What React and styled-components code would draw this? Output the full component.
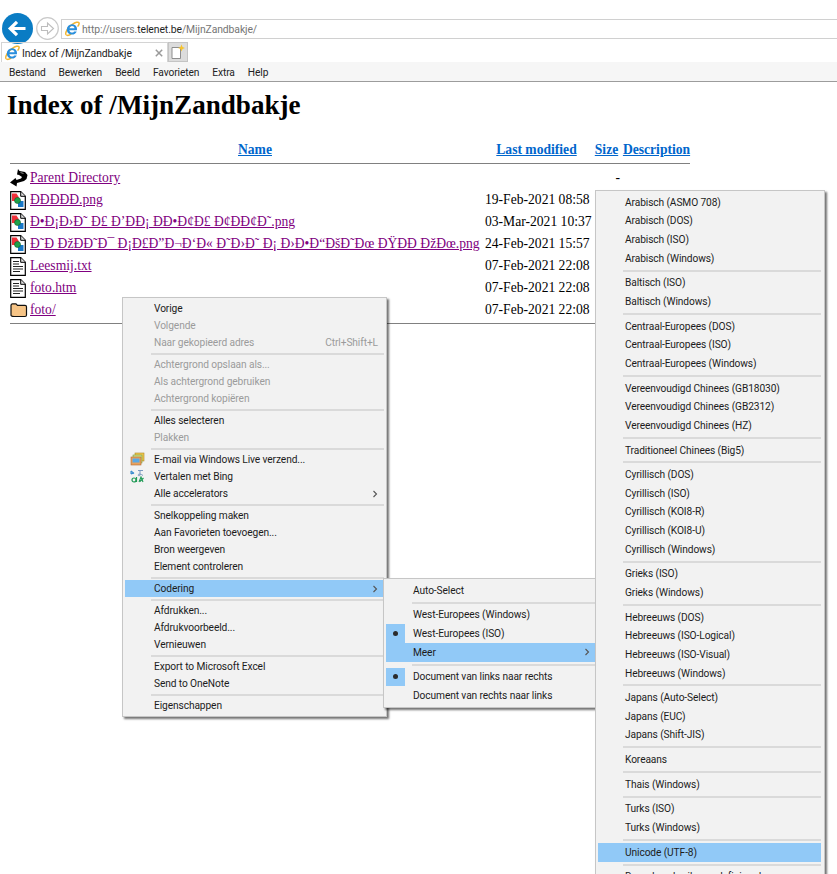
import React from 'react';
import styled, { createGlobalStyle } from 'styled-components';

const GlobalStyle = createGlobalStyle`
  html, body { margin: 0; padding: 0; background: #fff; }
  #root { width: 837px; height: 874px; overflow: hidden; position: relative; }
`;

const uiFont = `Roboto, "Noto Sans", "Liberation Sans", sans-serif`;
const pageFont = `"Liberation Serif", "Times New Roman", serif`;

const Chrome = styled.header`
  font-family: ${uiFont};
  background: #fff;
  letter-spacing: -0.1px;
`;
const NavBar = styled.div`
  display: flex;
  align-items: center;
  height: 42px;
  padding: 14px 0 0 2px;
  box-sizing: border-box;
  gap: 2.5px;
`;
const AddressBar = styled.div`
  flex: 1;
  display: flex;
  align-items: center;
  gap: 2px;
  height: 20px;
  box-sizing: border-box;
  margin-top: 2px;
  padding-left: 2px;
  border: 1px solid #d0d0d0;
  border-right: 0;
  font-size: 10.4px;
  color: #757575;
`;
const Host = styled.span`
  color: #1f1f1f;
`;
const TabStrip = styled.div`
  display: flex;
  height: 20px;
  padding-left: 1px;
`;
const Tab = styled.div`
  display: flex;
  align-items: center;
  width: 167px;
  box-sizing: border-box;
  padding: 1px 4px 0 2px;
  gap: 2px;
  border: 1px solid #d4d4d4;
  border-bottom: 0;
  font-size: 10.4px;
  color: #222;
`;
const TabTitle = styled.span`
  flex: 1;
`;
const NewTab = styled.div`
  display: flex;
  align-items: center;
  justify-content: center;
  width: 20px;
  box-sizing: border-box;
  background: #dcdcdc;
  border: 1px solid #c4c4c4;
`;
const MenuBar = styled.nav`
  display: flex;
  gap: 13px;
  align-items: center;
  height: 18px;
  padding: 1px 0 0 9px;
  background: #f6f6f6;
  border-bottom: 1px solid #9c9c9c;
  font-size: 10.2px;
  color: #222;
`;

const Page = styled.main`
  font-family: ${pageFont};
  color: #000;
`;
const Heading = styled.h1`
  margin: 0;
  padding: 7px 0 0 7px;
  font-size: 27.1px;
  line-height: 32px;
  font-weight: bold;
`;
const Listing = styled.div`
  display: grid;
  grid-template-columns: 20px 455px 110px 28px 67px;
  grid-template-rows: 23px 4px repeat(7, 22px) 3px;
  margin: 19px 0 0 10px;
  width: 680px;
  font-size: 13.6px;
`;
const Cell = styled.div`
  display: flex;
  align-items: center;
  white-space: nowrap;
  padding-right: ${p => p.$pad || 0}px;
  justify-content: ${p => p.$align || 'flex-start'};
`;
const HeadLink = styled.a`
  color: #0066cc;
  font-weight: bold;
  text-decoration: underline;
  margin-bottom: 3px;
`;
const FileLink = styled.a`
  color: #800080;
  text-decoration: underline;
`;
const Rule = styled.div`
  grid-column: 1 / -1;
  height: 1px;
  background: #808080;
  align-self: ${p => p.$align || 'start'};
`;

const MenuPanel = styled.div`
  position: absolute;
  left: ${p => p.$left}px;
  top: ${p => p.$top}px;
  width: ${p => p.$width}px;
  box-sizing: border-box;
  padding: 2px;
  background: #f2f2f2;
  border: 1px solid #c6c6c6;
  box-shadow: 2px 2px 2px rgba(0, 0, 0, 0.55);
  font-family: ${uiFont};
  font-size: 10.2px;
  letter-spacing: -0.1px;
  color: #1c1c1c;
  z-index: ${p => p.$layer};
`;
const MenuRow = styled.div`
  display: flex;
  align-items: center;
  height: ${p => p.$height}px;
  padding-left: ${p => p.$indent}px;
  padding-right: ${p => p.$endPad}px;
  margin-right: ${p => p.$gutter}px;
  position: relative;
  white-space: nowrap;
  color: ${p => (p.$disabled ? '#9b9b9b' : 'inherit')};
  background: ${p => (p.$active ? '#91c9f7' : 'transparent')};
`;
const RowLabel = styled.span`
  flex: 1;
`;
const Shortcut = styled.span`
  color: #9b9b9b;
`;
const MenuIcon = styled.span`
  position: absolute;
  left: 3px;
  top: 0;
  width: 18px;
  height: 100%;
  display: flex;
  align-items: center;
  justify-content: center;
`;
const CheckMark = styled.span`
  position: absolute;
  left: 0;
  top: 0;
  width: 19px;
  height: 100%;
  background: #91c9f7;
  display: flex;
  align-items: center;
  justify-content: center;
  &::after {
    content: '';
    width: 5px;
    height: 5px;
    border-radius: 50%;
    background: #2b2b2b;
  }
`;
const Divider = styled.div`
  height: 2px;
  margin: ${p => p.$space}px ${p => p.$gutter}px ${p => p.$space}px ${p => p.$start}px;
  background: #dadada;
`;

function IeLogo({ size = 16 }) {
  return (
    <svg width={size} height={size} viewBox="0 0 16 16">
      <path d="M2.2 13.8C.6 12.4 3.4 6.6 8 3.600c3.600-2.400 6.400-3 7-1.800.4.900-.3 2.400-1.400 3.800" fill="none" stroke="#f2b632" strokeWidth="1.500" />
      <path d="M2.2 13.8c1 1 3.200.4 5-.6" fill="none" stroke="#f2b632" strokeWidth="1.500" />
      <path d="M8 3.200a5.200 5.200 0 0 0-5.200 5.200c0 2.900 2.300 5.100 5.200 5.100 2.200 0 4-1.200 4.700-3.100h-2.600c-.5.800-1.200 1.200-2.100 1.200-1.300 0-2.400-.9-2.600-2.400h7.500c.1-.3.100-.6.100-.9C13.200 5.400 11 3.200 8 3.200zM5.500 7.300C5.700 6 6.700 5.100 8 5.100s2.300.9 2.500 2.200z" fill="#2a8fdc" />
    </svg>
  );
}

function BackButton() {
  return (
    <svg width="31" height="31" viewBox="0 0 31 31">
      <circle cx="15.500" cy="15.500" r="15.500" fill="#0a7cc4" />
      <path d="M23.500 15.500H9M15 8.800l-6.800 6.700 6.800 6.700" fill="none" stroke="#fff" strokeWidth="3.200" />
    </svg>
  );
}

function ForwardButton() {
  return (
    <svg width="23" height="23" viewBox="0 0 23 23">
      <circle cx="11.500" cy="11.500" r="10.800" fill="#fff" stroke="#c9c9c9" strokeWidth="1.200" />
      <path d="M5.500 9.500h6V6l6 5.500-6 5.500v-3.500h-6z" fill="none" stroke="#bdbdbd" strokeWidth="1.100" />
    </svg>
  );
}

function NewTabIcon() {
  return (
    <svg width="16" height="16" viewBox="0 0 16 16">
      <path d="M2 3.500h8.500v11H2z" fill="#fff" stroke="#8d8d8d" />
      <path d="M11.500.5l1 2.500 2.500 1-2.500 1-1 2.500-1-2.500-2.500-1 2.500-1z" fill="#f6c32d" />
    </svg>
  );
}

function CloseIcon() {
  return (
    <svg width="8" height="8" viewBox="0 0 8 8">
      <path d="M.8.8l6.400 6.400M7.200.8L.8 7.200" stroke="#9a9a9a" strokeWidth="1.500" />
    </svg>
  );
}

function ParentIcon() {
  return (
    <svg width="18" height="18" viewBox="0 0 18 18">
      <path d="M8 0l1.500 2L15 3l2.500 3-1 4-2.500 2-7 2-.5 3.500L0 13.500 5.500 9l1 2 4.500-1.500 1-1.500-3-2-2-.5z" fill="#000" />
      <path d="M10.500 3.500l3 1" stroke="#888" strokeWidth="1" />
    </svg>
  );
}

function ImageIcon() {
  return (
    <svg width="16" height="19" viewBox="0 0 16 19">
      <path d="M.7.7h10l4.600 4.600v13H.7z" fill="#fff" stroke="#000" strokeWidth="1.200" />
      <path d="M10.700.7v4.600h4.600" fill="#ddd" stroke="#000" />
      <path d="M2 2.500h4.500l2.500 4-3.500 3.500H2z" fill="#f0303a" />
      <path d="M8 10h5.500v6H8z" fill="#1878c8" />
      <circle cx="7.500" cy="9.500" r="3" fill="#1fa04a" stroke="#0d5a28" strokeWidth=".6" />
    </svg>
  );
}

function TextIcon() {
  return (
    <svg width="16" height="19" viewBox="0 0 16 19">
      <path d="M.7.7h10l4.600 4.600v13H.7z" fill="#fff" stroke="#000" strokeWidth="1.200" />
      <path d="M10.700.7v4.600h4.600" fill="#ddd" stroke="#000" />
      <path d="M3 4.500h6M3 7h6M3 9.500h10M3 12h10M3 14.500h7" stroke="#222" strokeWidth="1.100" />
    </svg>
  );
}

function FolderIcon() {
  return (
    <svg width="18" height="16" viewBox="0 0 18 16">
      <path d="M1 3.500c0-1 .6-1.700 1.500-1.700h3.500l1.500 1.500h7.500c1 0 1.500.6 1.500 1.500v8.200c0 1-.6 1.500-1.500 1.500h-11C1.600 14.500 1 14 1 13z" fill="#f6c486" stroke="#111" strokeWidth="1.200" />
    </svg>
  );
}

function MailIcon() {
  return (
    <svg width="15" height="15" viewBox="0 0 15 15">
      <rect x="5" y="1" width="9" height="8" fill="#f2c94c" stroke="#a9882a" strokeWidth=".6" />
      <rect x="3" y="3" width="9" height="8" fill="#cfe08a" stroke="#7d9a3c" strokeWidth=".6" />
      <rect x="1" y="5" width="10" height="8" fill="#e9a25f" stroke="#b26a2c" strokeWidth=".6" />
      <rect x="2.500" y="6.500" width="7" height="4" fill="#5aa9e6" />
    </svg>
  );
}

function TranslateIcon() {
  return (
    <svg width="15" height="15" viewBox="0 0 15 15">
      <path d="M1 2l3 2.500M1 5l3-1M1 2v3" stroke="#3a8ccf" strokeWidth="1.100" fill="none" />
      <path d="M8 1.500h5M10 1v5c0 1-2 1-2 0s3-1.500 5 .5" stroke="#7b9ac0" strokeWidth="1" fill="none" />
      <circle cx="4" cy="11" r="2" fill="none" stroke="#1f9a55" strokeWidth="1.200" />
      <path d="M6.500 8v5" stroke="#1f9a55" strokeWidth="1.200" />
      <path d="M9 13l2-5 2 5M13.500 9l-3.500 3.500" stroke="#1f9a55" strokeWidth="1.100" fill="none" />
    </svg>
  );
}

const files = [
  { icon: <ImageIcon />, name: 'ÐÐÐÐÐ.png', date: '19-Feb-2021 08:58' },
  { icon: <ImageIcon />, name: 'Ð•Ð¡Ð›Ð˜ Ð£ Ð’ÐÐ¡ ÐÐ•Ð¢Ð£ Ð¢ÐÐ¢Ð˜.png', date: '03-Mar-2021 10:37' },
  { icon: <ImageIcon />, name: 'Ð˜Ð ÐžÐÐ˜Ð¯ Ð¡Ð£Ð”Ð¬Ð‘Ð« Ð˜Ð›Ð˜ Ð¡ Ð›Ð•Ð“ÐšÐ˜Ðœ ÐŸÐÐ ÐžÐœ.png', date: '24-Feb-2021 15:57' },
  { icon: <TextIcon />, name: 'Leesmij.txt', date: '07-Feb-2021 22:08' },
  { icon: <TextIcon />, name: 'foto.htm', date: '07-Feb-2021 22:08' },
  { icon: <FolderIcon />, name: 'foto/', date: '07-Feb-2021 22:08' },
];

const contextGroups = [
  [
    { label: 'Vorige' },
    { label: 'Volgende', disabled: true },
    { label: 'Naar gekopieerd adres', disabled: true, shortcut: 'Ctrl+Shift+L' },
  ],
  [
    { label: 'Achtergrond opslaan als...', disabled: true },
    { label: 'Als achtergrond gebruiken', disabled: true },
    { label: 'Achtergrond kopiëren', disabled: true },
  ],
  [{ label: 'Alles selecteren' }, { label: 'Plakken', disabled: true }],
  [
    { label: 'E-mail via Windows Live verzend...', icon: <MailIcon /> },
    { label: 'Vertalen met Bing', icon: <TranslateIcon /> },
    { label: 'Alle accelerators', sub: true },
  ],
  [
    { label: 'Snelkoppeling maken' },
    { label: 'Aan Favorieten toevoegen...' },
    { label: 'Bron weergeven' },
    { label: 'Element controleren' },
  ],
  [{ label: 'Codering', sub: true, active: true }],
  [{ label: 'Afdrukken...' }, { label: 'Afdrukvoorbeeld...' }, { label: 'Vernieuwen' }],
  [{ label: 'Export to Microsoft Excel' }, { label: 'Send to OneNote' }],
  [{ label: 'Eigenschappen' }],
];

const encodingGroups = [
  [{ label: 'Auto-Select' }],
  [
    { label: 'West-Europees (Windows)' },
    { label: 'West-Europees (ISO)', checked: true },
    { label: 'Meer', sub: true, active: true },
  ],
  [
    { label: 'Document van links naar rechts', checked: true },
    { label: 'Document van rechts naar links' },
  ],
];

const names = list => list.map(label => ({ label }));

const moreGroups = [
  names(['Arabisch (ASMO 708)', 'Arabisch (DOS)', 'Arabisch (ISO)', 'Arabisch (Windows)']),
  names(['Baltisch (ISO)', 'Baltisch (Windows)']),
  names(['Centraal-Europees (DOS)', 'Centraal-Europees (ISO)', 'Centraal-Europees (Windows)']),
  names(['Vereenvoudigd Chinees (GB18030)', 'Vereenvoudigd Chinees (GB2312)', 'Vereenvoudigd Chinees (HZ)']),
  names(['Traditioneel Chinees (Big5)']),
  names(['Cyrillisch (DOS)', 'Cyrillisch (ISO)', 'Cyrillisch (KOI8-R)', 'Cyrillisch (KOI8-U)', 'Cyrillisch (Windows)']),
  names(['Grieks (ISO)', 'Grieks (Windows)']),
  names(['Hebreeuws (DOS)', 'Hebreeuws (ISO-Logical)', 'Hebreeuws (ISO-Visual)', 'Hebreeuws (Windows)']),
  names(['Japans (Auto-Select)', 'Japans (EUC)', 'Japans (Shift-JIS)']),
  names(['Koreaans']),
  names(['Thais (Windows)']),
  names(['Turks (ISO)', 'Turks (Windows)']),
  [{ label: 'Unicode (UTF-8)', active: true }],
  names(['Door de gebruiker gedefinieerd']),
];

function PopupMenu({ groups, left, top, width, layer, rowHeight, indent, dividerSpace, dividerStart, gutter = 0, endPad = 6 }) {
  return (
    <MenuPanel $left={left} $top={top} $width={width} $layer={layer}>
      {groups.map((group, i) => (
        <React.Fragment key={i}>
          {i > 0 && <Divider $space={dividerSpace} $start={dividerStart} $gutter={gutter} />}
          {group.map(item => (
            <MenuRow
              key={item.label}
              $height={rowHeight}
              $indent={indent}
              $endPad={endPad}
              $gutter={gutter}
              $disabled={item.disabled}
              $active={item.active}
            >
              {item.icon && <MenuIcon>{item.icon}</MenuIcon>}
              {item.checked && <CheckMark />}
              <RowLabel>{item.label}</RowLabel>
              {item.shortcut && <Shortcut>{item.shortcut}</Shortcut>}
              {item.sub && (
                <svg width="6" height="8" viewBox="0 0 6 8">
                  <path d="M1.500 1l3 3-3 3" fill="none" stroke="#555" strokeWidth="1.100" />
                </svg>
              )}
            </MenuRow>
          ))}
        </React.Fragment>
      ))}
    </MenuPanel>
  );
}

export default function App() {
  return (
    <>
      <GlobalStyle />
      <Chrome>
        <NavBar>
          <BackButton />
          <ForwardButton />
          <AddressBar>
            <IeLogo />
            <span>
              http://users.<Host>telenet.be</Host>/MijnZandbakje/
            </span>
          </AddressBar>
        </NavBar>
        <TabStrip>
          <Tab>
            <IeLogo />
            <TabTitle>Index of /MijnZandbakje</TabTitle>
            <CloseIcon />
          </Tab>
          <NewTab>
            <NewTabIcon />
          </NewTab>
        </TabStrip>
        <MenuBar>
          {['Bestand', 'Bewerken', 'Beeld', 'Favorieten', 'Extra', 'Help'].map(m => (
            <span key={m}>{m}</span>
          ))}
        </MenuBar>
      </Chrome>
      <Page>
        <Heading>Index of /MijnZandbakje</Heading>
        <Listing>
          <Cell />
          <Cell $pad={5} $align="center"><HeadLink>Name</HeadLink></Cell>
          <Cell $pad={7} $align="center"><HeadLink>Last modified</HeadLink></Cell>
          <Cell $pad={5} $align="center"><HeadLink>Size</HeadLink></Cell>
          <Cell $align="center"><HeadLink>Description</HeadLink></Cell>
          <Rule />
          <Cell><ParentIcon /></Cell>
          <Cell><FileLink>Parent Directory</FileLink></Cell>
          <Cell />
          <Cell $pad={3} $align="flex-end">-</Cell>
          <Cell />
          {files.map(f => (
            <React.Fragment key={f.name}>
              <Cell>{f.icon}</Cell>
              <Cell><FileLink>{f.name}</FileLink></Cell>
              <Cell>{f.date}</Cell>
              <Cell />
              <Cell />
            </React.Fragment>
          ))}
          <Rule $align="end" />
        </Listing>
      </Page>
      <PopupMenu groups={contextGroups} left={122} top={297} width={265} layer={1} rowHeight={17} indent={29} dividerSpace={1.5} dividerStart={26} />
      <PopupMenu groups={encodingGroups} left={383} top={578} width={216} layer={2} rowHeight={18.65} indent={27} dividerSpace={2} dividerStart={26} />
      <PopupMenu groups={moreGroups} left={595} top={190} width={230} layer={3} rowHeight={18.65} indent={27} dividerSpace={2} dividerStart={25} gutter={1} />
    </>
  );
}
